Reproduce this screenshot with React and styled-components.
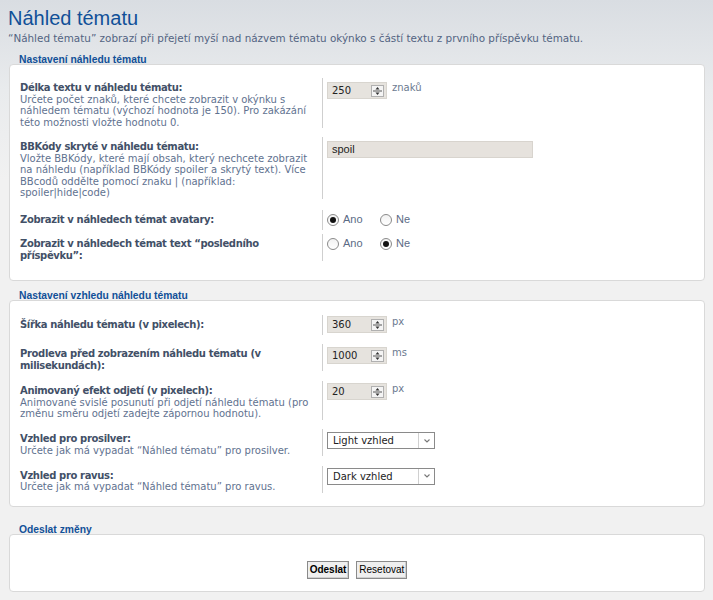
import React from "react";
import styled, { createGlobalStyle } from "styled-components";

const Global = createGlobalStyle`
  html, body { margin: 0; padding: 0; }
  body {
    background: linear-gradient(#d9dde2 0px, #e9ebed 90px, #f1f1f1 180px, #f1f1f1 100%);
    min-height: 600px;
    font-family: "DejaVu Sans", Verdana, sans-serif;
  }
`;

const Page = styled.div`
  padding: 5px 8px 8px 9px;
  width: 696px;
`;

const Title = styled.h1`
  margin: 0 0 0 -1px;
  font-family: "Liberation Sans", Arial, sans-serif;
  font-weight: normal;
  font-size: 20px;
  line-height: 26px;
  color: #115098;
`;

const Intro = styled.p`
  margin: 1px 0 0 -1px;
  font-size: 10.4px;
  line-height: 13px;
  color: #536482;
`;

const Fieldset = styled.section`
  margin-top: ${(p) => p.$top}px;
`;

const Legend = styled.div`
  font-family: "Liberation Sans", Tahoma, sans-serif;
  font-weight: bold;
  font-size: 10.3px;
  line-height: 12px;
  color: #115098;
  padding-left: 10px;
  position: relative;
  z-index: 1;
  margin-bottom: -2px;
`;

const Box = styled.div`
  background: #fff;
  border: 1px solid #d9d9d9;
  border-radius: 4px;
  padding: ${(p) => p.$pad};
`;

const Row = styled.div`
  display: grid;
  grid-template-columns: 313px 1fr;
  margin-bottom: ${(p) => p.$mb ?? 0}px;
`;

const Dt = styled.div`
  padding: 4px 10px 0 10px;
  border-right: 1px solid #cfcfcf;
`;

const Label = styled.div`
  font-weight: bold;
  font-size: 10px;
  letter-spacing: -0.35px;
  line-height: 11.5px;
  color: #425067;
`;

const Desc = styled.div`
  font-size: 10px;
  line-height: 11.5px;
  color: #5f7290;
`;

const Dd = styled.div`
  padding: ${(p) => p.$pt ?? 2}px 0 ${(p) => p.$pb ?? 2}px 4px;
  display: flex;
  align-items: flex-start;
  gap: 5px;
`;

const NumWrap = styled.div`
  width: 60px;
  height: 17px;
  box-sizing: border-box;
  background: #e6e3de;
  border: 1px solid #d8d5cf;
  display: flex;
  align-items: center;
  justify-content: space-between;
  padding: 0 2px 0 4px;
  font-family: "DejaVu Sans", sans-serif;
  font-size: 10px;
  color: #222;
`;

const Unit = styled.span`
  font-size: 10px;
  line-height: 14px;
  color: #6b7a90;
  margin-top: -1px;
`;

const TextInput = styled.div`
  width: 206px;
  height: 17px;
  box-sizing: border-box;
  background: #e6e2dd;
  border: 1px solid #d8d4ce;
  padding: 0 4px;
  font-family: "Liberation Sans", Arial, sans-serif;
  font-size: 11px;
  line-height: 15px;
  color: #222;
`;

const RadioGroup = styled.div`
  display: flex;
  align-items: center;
`;

const RadioLabel = styled.label`
  display: flex;
  align-items: center;
  gap: 4px;
  width: ${(p) => p.$w}px;
  font-family: "Liberation Sans", Arial, sans-serif;
  font-size: 11px;
  line-height: 13px;
  color: #5b6b85;
`;

const RadioDot = styled.span`
  width: 12px;
  height: 12px;
  box-sizing: border-box;
  border-radius: 50%;
  border: 1px solid #8a8a8a;
  background: linear-gradient(#f2f2f2, #fff);
  display: flex;
  align-items: center;
  justify-content: center;
  &::after {
    content: "";
    width: 6px;
    height: 6px;
    border-radius: 50%;
    background: ${(p) => (p.$on ? "#111" : "transparent")};
  }
`;

const Select = styled.div`
  width: 108px;
  height: 17px;
  box-sizing: border-box;
  background: #fff;
  border: 1px solid #8a8a8a;
  display: flex;
  align-items: stretch;
  font-size: 10px;
  color: #222;
`;

const SelectText = styled.span`
  flex: 1;
  padding-left: 5px;
  line-height: 15px;
`;

const SelectArrow = styled.span`
  width: 15px;
  border-left: 1px solid #d0d0d0;
  display: flex;
  align-items: center;
  justify-content: center;
`;

const Buttons = styled.div`
  display: flex;
  justify-content: center;
  gap: 7px;
`;

const Button = styled.button`
  font-family: "Liberation Sans", Tahoma, sans-serif;
  font-size: 10px;
  font-weight: ${(p) => (p.$primary ? "bold" : "normal")};
  color: #000;
  background: #efefef;
  border: 1px solid #8a8a8a;
  box-shadow: inset -1px -1px 0 #d0d0d0;
  padding: 0 2px;
  height: 18px;
  margin: 0;
`;

function Spinner() {
  return (
    <svg width="13" height="12" viewBox="0 0 13 12">
      <rect x="0.5" y="0.5" width="12" height="11" fill="#f4f4f4" stroke="#b0b0b0" />
      <line x1="2" y1="6" x2="11" y2="6" stroke="#555" />
      <path d="M4.5 4.5 L6.5 2 L8.5 4.5 Z" fill="#333" />
      <path d="M4.5 7.5 L6.5 10 L8.5 7.5 Z" fill="#333" />
    </svg>
  );
}

function Chevron() {
  return (
    <svg width="8" height="6" viewBox="0 0 8 6">
      <path d="M1.5 1.5 L4 4 L6.5 1.5" fill="none" stroke="#777" strokeWidth="1.1" />
    </svg>
  );
}

function NumberInput({ value, unit }) {
  return (
    <>
      <NumWrap>
        <span>{value}</span>
        <Spinner />
      </NumWrap>
      <Unit>{unit}</Unit>
    </>
  );
}

function Radios({ yes }) {
  return (
    <RadioGroup>
      <RadioLabel $w={53}>
        <RadioDot $on={yes} />
        Ano
      </RadioLabel>
      <RadioLabel $w={40}>
        <RadioDot $on={!yes} />
        Ne
      </RadioLabel>
    </RadioGroup>
  );
}

function Dropdown({ value }) {
  return (
    <Select>
      <SelectText>{value}</SelectText>
      <SelectArrow>
        <Chevron />
      </SelectArrow>
    </Select>
  );
}

export default function App() {
  return (
    <>
      <Global />
      <Page>
        <Title>Náhled tématu</Title>
        <Intro>
          “Náhled tématu” zobrazí při přejetí myší nad názvem tématu okýnko s částí textu z prvního příspěvku tématu.
        </Intro>

        <Fieldset $top={9}>
          <Legend>Nastavení náhledu tématu</Legend>
          <Box $pad="13px 0 19px 0">
            <Row $mb={9}>
              <Dt>
                <Label>Délka textu v náhledu tématu:</Label>
                <Desc>
                  Určete počet znaků, které chcete zobrazit v okýnku s náhledem tématu (výchozí hodnota je 150). Pro zakázání této možnosti vložte hodnotu 0.
                </Desc>
              </Dt>
              <Dd $pt={4}>
                <NumberInput value="250" unit="znaků" />
              </Dd>
            </Row>
            <Row $mb={11.5}>
              <Dt>
                <Label>BBKódy skryté v náhledu tématu:</Label>
                <Desc>
                  Vložte BBKódy, které mají obsah, který nechcete zobrazit na náhledu (například BBKódy spoiler a skrytý text). Více BBcodů oddělte pomocí znaku | (například: spoiler|hide|code)
                </Desc>
              </Dt>
              <Dd $pt={4}>
                <TextInput>spoil</TextInput>
              </Dd>
            </Row>
            <Row $mb={4}>
              <Dt>
                <Label>Zobrazit v náhledech témat avatary:</Label>
              </Dt>
              <Dd $pt={3} $pb={4}>
                <Radios yes />
              </Dd>
            </Row>
            <Row>
              <Dt>
                <Label>Zobrazit v náhledech témat text “posledního příspěvku”:</Label>
              </Dt>
              <Dd $pt={3}>
                <Radios yes={false} />
              </Dd>
            </Row>
          </Box>
        </Fieldset>

        <Fieldset $top={9}>
          <Legend>Nastavení vzhledu náhledu tématu</Legend>
          <Box $pad="14px 0 13px 0">
            <Row $mb={9}>
              <Dt>
                <Label>Šířka náhledu tématu (v pixelech):</Label>
              </Dt>
              <Dd $pt={1}>
                <NumberInput value="360" unit="px" />
              </Dd>
            </Row>
            <Row $mb={10}>
              <Dt>
                <Label>Prodleva před zobrazením náhledu tématu (v milisekundách):</Label>
              </Dt>
              <Dd $pt={3}>
                <NumberInput value="1000" unit="ms" />
              </Dd>
            </Row>
            <Row $mb={9.5}>
              <Dt>
                <Label>Animovaný efekt odjetí (v pixelech):</Label>
                <Desc>
                  Animované svislé posunutí při odjetí náhledu tématu (pro změnu směru odjetí zadejte zápornou hodnotu).
                </Desc>
              </Dt>
              <Dd $pt={2}>
                <NumberInput value="20" unit="px" />
              </Dd>
            </Row>
            <Row $mb={9.5}>
              <Dt>
                <Label>Vzhled pro prosilver:</Label>
                <Desc>Určete jak má vypadat “Náhled tématu” pro prosilver.</Desc>
              </Dt>
              <Dd $pt={3}>
                <Dropdown value="Light vzhled" />
              </Dd>
            </Row>
            <Row>
              <Dt>
                <Label>Vzhled pro ravus:</Label>
                <Desc>Určete jak má vypadat “Náhled tématu” pro ravus.</Desc>
              </Dt>
              <Dd $pt={2}>
                <Dropdown value="Dark vzhled" />
              </Dd>
            </Row>
          </Box>
        </Fieldset>

        <Fieldset $top={17}>
          <Legend>Odeslat změny</Legend>
          <Box $pad="26px 0 12px 0">
            <Buttons>
              <Button $primary>Odeslat</Button>
              <Button>Resetovat</Button>
            </Buttons>
          </Box>
        </Fieldset>
      </Page>
    </>
  );
}
